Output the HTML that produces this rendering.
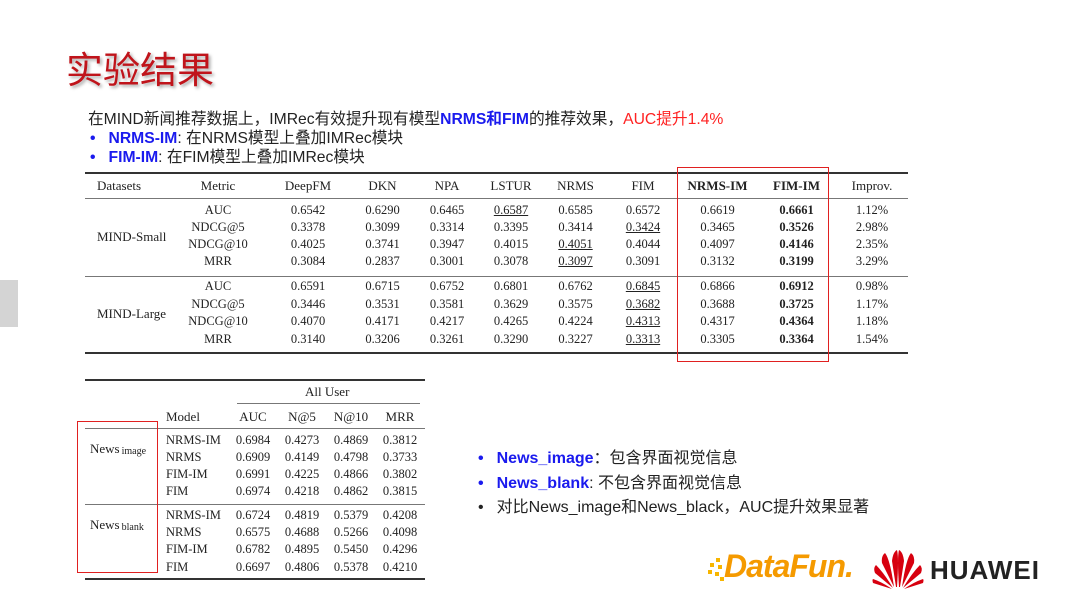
<!DOCTYPE html>
<html><head><meta charset="utf-8"><style>
body{margin:0;width:1080px;height:607px;background:#fff;position:relative;overflow:hidden;font-family:"Liberation Sans","Noto Sans CJK SC",sans-serif}
.a{position:absolute;white-space:nowrap}
.r{position:absolute;display:flex;height:17px;line-height:17px;font-family:"Liberation Serif","Noto Serif CJK SC",serif;font-size:12.5px;color:#222}
.r span{text-align:center;display:block}
.hl{position:absolute;background:#333}
.b{font-weight:bold}
.u{text-decoration:underline}
.blue{color:#1a1aee;font-weight:bold}
.sb{font-size:10px;position:relative;top:3px;margin-left:2px}
</style></head><body>
<div class="a" style="left:0;top:280px;width:18px;height:47px;background:#d4d4d4"></div>
<div class="a" style="left:66px;top:40px;font-size:37px;color:#c0141b;text-shadow:2px 2px 3px rgba(0,0,0,.35);letter-spacing:0px">实验结果</div>
<div class="a" style="left:88px;top:106px;font-size:15.7px;color:#222">在MIND新闻推荐数据上，IMRec有效提升现有模型<span class="blue">NRMS和FIM</span>的推荐效果，<span style="color:#f22">AUC提升1.4%</span></div>
<div class="a" style="left:90px;top:125px;font-size:15.7px;color:#222"><span class="blue" style="margin-right:13px">•</span><span class="blue">NRMS-IM</span>: 在NRMS模型上叠加IMRec模块</div>
<div class="a" style="left:90px;top:144px;font-size:15.7px;color:#222"><span class="blue" style="margin-right:13px">•</span><span class="blue">FIM-IM</span>: 在FIM模型上叠加IMRec模块</div>

<div class="hl" style="left:85px;top:172px;width:823px;height:1.5px"></div>
<div class="hl" style="left:85px;top:198px;width:823px;height:1px;background:#777"></div>
<div class="hl" style="left:85px;top:276px;width:823px;height:1px;background:#777"></div>
<div class="hl" style="left:85px;top:352px;width:823px;height:1.5px"></div>

<div class="r" style="left:85px;top:177px;font-size:13px"><span style="width:85px;text-align:left;padding-left:12px;box-sizing:border-box">Datasets</span><span style="width:96px">Metric</span><span style="width:84px">DeepFM</span><span style="width:65px">DKN</span><span style="width:64px">NPA</span><span style="width:64px">LSTUR</span><span style="width:65px">NRMS</span><span style="width:70px">FIM</span><span style="width:79px" class="b">NRMS-IM</span><span style="width:79px" class="b">FIM-IM</span><span style="width:72px">Improv.</span></div>

<div class="r" style="left:97px;top:228px;font-size:13px">MIND-Small</div>
<div class="r" style="left:97px;top:305px;font-size:13px">MIND-Large</div>

<div class="r" style="left:170px;top:202px"><span style="width:96px">AUC</span><span style="width:84px">0.6542</span><span style="width:65px">0.6290</span><span style="width:64px">0.6465</span><span style="width:64px" class="u">0.6587</span><span style="width:65px">0.6585</span><span style="width:70px">0.6572</span><span style="width:79px">0.6619</span><span style="width:79px" class="b">0.6661</span><span style="width:72px">1.12%</span></div>
<div class="r" style="left:170px;top:219px"><span style="width:96px">NDCG@5</span><span style="width:84px">0.3378</span><span style="width:65px">0.3099</span><span style="width:64px">0.3314</span><span style="width:64px">0.3395</span><span style="width:65px">0.3414</span><span style="width:70px" class="u">0.3424</span><span style="width:79px">0.3465</span><span style="width:79px" class="b">0.3526</span><span style="width:72px">2.98%</span></div>
<div class="r" style="left:170px;top:236px"><span style="width:96px">NDCG@10</span><span style="width:84px">0.4025</span><span style="width:65px">0.3741</span><span style="width:64px">0.3947</span><span style="width:64px">0.4015</span><span style="width:65px" class="u">0.4051</span><span style="width:70px">0.4044</span><span style="width:79px">0.4097</span><span style="width:79px" class="b">0.4146</span><span style="width:72px">2.35%</span></div>
<div class="r" style="left:170px;top:253px"><span style="width:96px">MRR</span><span style="width:84px">0.3084</span><span style="width:65px">0.2837</span><span style="width:64px">0.3001</span><span style="width:64px">0.3078</span><span style="width:65px" class="u">0.3097</span><span style="width:70px">0.3091</span><span style="width:79px">0.3132</span><span style="width:79px" class="b">0.3199</span><span style="width:72px">3.29%</span></div>

<div class="r" style="left:170px;top:278px"><span style="width:96px">AUC</span><span style="width:84px">0.6591</span><span style="width:65px">0.6715</span><span style="width:64px">0.6752</span><span style="width:64px">0.6801</span><span style="width:65px">0.6762</span><span style="width:70px" class="u">0.6845</span><span style="width:79px">0.6866</span><span style="width:79px" class="b">0.6912</span><span style="width:72px">0.98%</span></div>
<div class="r" style="left:170px;top:296px"><span style="width:96px">NDCG@5</span><span style="width:84px">0.3446</span><span style="width:65px">0.3531</span><span style="width:64px">0.3581</span><span style="width:64px">0.3629</span><span style="width:65px">0.3575</span><span style="width:70px" class="u">0.3682</span><span style="width:79px">0.3688</span><span style="width:79px" class="b">0.3725</span><span style="width:72px">1.17%</span></div>
<div class="r" style="left:170px;top:313px"><span style="width:96px">NDCG@10</span><span style="width:84px">0.4070</span><span style="width:65px">0.4171</span><span style="width:64px">0.4217</span><span style="width:64px">0.4265</span><span style="width:65px">0.4224</span><span style="width:70px" class="u">0.4313</span><span style="width:79px">0.4317</span><span style="width:79px" class="b">0.4364</span><span style="width:72px">1.18%</span></div>
<div class="r" style="left:170px;top:331px"><span style="width:96px">MRR</span><span style="width:84px">0.3140</span><span style="width:65px">0.3206</span><span style="width:64px">0.3261</span><span style="width:64px">0.3290</span><span style="width:65px">0.3227</span><span style="width:70px" class="u">0.3313</span><span style="width:79px">0.3305</span><span style="width:79px" class="b">0.3364</span><span style="width:72px">1.54%</span></div>

<div class="a" style="left:677px;top:167px;width:150px;height:193px;border:1.5px solid #e02020"></div>

<!-- small table -->
<div class="hl" style="left:85px;top:379px;width:340px;height:1.5px"></div>
<div class="hl" style="left:237px;top:403px;width:183px;height:1px;background:#777"></div>
<div class="hl" style="left:85px;top:428px;width:340px;height:1px;background:#777"></div>
<div class="hl" style="left:85px;top:504px;width:340px;height:1px;background:#777"></div>
<div class="hl" style="left:85px;top:578px;width:340px;height:1.5px"></div>
<div class="r" style="left:305px;top:383px;font-size:13px">All User</div>
<div class="r" style="left:166px;top:408px;font-size:13px"><span style="width:62px;text-align:left">Model</span><span style="width:50px">AUC</span><span style="width:48px">N@5</span><span style="width:50px">N@10</span><span style="width:48px">MRR</span></div>
<div class="r" style="left:90px;top:440px;font-size:13px">News<span class="sb">image</span></div>
<div class="r" style="left:90px;top:516px;font-size:13px">News<span class="sb">blank</span></div>
<div class="r" style="left:166px;top:432px"><span style="width:62px;text-align:left">NRMS-IM</span><span style="width:50px">0.6984</span><span style="width:48px">0.4273</span><span style="width:50px">0.4869</span><span style="width:48px">0.3812</span></div>
<div class="r" style="left:166px;top:449px"><span style="width:62px;text-align:left">NRMS</span><span style="width:50px">0.6909</span><span style="width:48px">0.4149</span><span style="width:50px">0.4798</span><span style="width:48px">0.3733</span></div>
<div class="r" style="left:166px;top:466px"><span style="width:62px;text-align:left">FIM-IM</span><span style="width:50px">0.6991</span><span style="width:48px">0.4225</span><span style="width:50px">0.4866</span><span style="width:48px">0.3802</span></div>
<div class="r" style="left:166px;top:483px"><span style="width:62px;text-align:left">FIM</span><span style="width:50px">0.6974</span><span style="width:48px">0.4218</span><span style="width:50px">0.4862</span><span style="width:48px">0.3815</span></div>
<div class="r" style="left:166px;top:507px"><span style="width:62px;text-align:left">NRMS-IM</span><span style="width:50px">0.6724</span><span style="width:48px">0.4819</span><span style="width:50px">0.5379</span><span style="width:48px">0.4208</span></div>
<div class="r" style="left:166px;top:524px"><span style="width:62px;text-align:left">NRMS</span><span style="width:50px">0.6575</span><span style="width:48px">0.4688</span><span style="width:50px">0.5266</span><span style="width:48px">0.4098</span></div>
<div class="r" style="left:166px;top:541px"><span style="width:62px;text-align:left">FIM-IM</span><span style="width:50px">0.6782</span><span style="width:48px">0.4895</span><span style="width:50px">0.5450</span><span style="width:48px">0.4296</span></div>
<div class="r" style="left:166px;top:559px"><span style="width:62px;text-align:left">FIM</span><span style="width:50px">0.6697</span><span style="width:48px">0.4806</span><span style="width:50px">0.5378</span><span style="width:48px">0.4210</span></div>
<div class="a" style="left:77px;top:421px;width:79px;height:150px;border:1.5px solid #e02020"></div>

<div class="a" style="left:478px;top:444px;font-size:16px;color:#222"><span class="blue" style="margin-right:13px">•</span><span class="blue">News_image</span>：包含界面视觉信息</div>
<div class="a" style="left:478px;top:469px;font-size:16px;color:#222"><span class="blue" style="margin-right:13px">•</span><span class="blue">News_blank</span>: 不包含界面视觉信息</div>
<div class="a" style="left:478px;top:493px;font-size:16px;color:#222"><span style="margin-right:13px">•</span>对比News_image和News_black，AUC提升效果显著</div>

<svg class="a" style="left:706px;top:555px" width="20" height="28" viewBox="0 0 20 28"><g fill="#f7b500"><rect x="10" y="3" width="4" height="4"/><rect x="4" y="8" width="4" height="4"/><rect x="12" y="10" width="4" height="4"/><rect x="2" y="15" width="4" height="4"/><rect x="9" y="17" width="4" height="4"/><rect x="14" y="22" width="4" height="4"/></g></svg>
<div class="a" style="left:724px;top:548px;font-size:32px;font-weight:bold;font-style:italic;color:#f59a00;letter-spacing:-1px">DataFun.</div>
<svg class="a" style="left:872px;top:549px" width="52" height="40" viewBox="0 0 52 40"><g fill="#d7000f">
<path d="M24 38 L20 12 Q21 3 25 1 Q27 8 25 38Z"/>
<path d="M28 38 L32 12 Q31 3 27 1 Q25 8 27 38Z"/>
<path d="M22 38 L10 14 Q9 7 13 4 Q18 10 22 38Z"/>
<path d="M30 38 L42 14 Q43 7 39 4 Q34 10 30 38Z"/>
<path d="M21 39 L3 24 Q1 19 4 16 Q12 24 21 39Z"/>
<path d="M31 39 L49 24 Q51 19 48 16 Q40 24 31 39Z"/>
<path d="M20 40 L1 34 Q0 31 1 30 Q10 33 20 40Z"/>
<path d="M32 40 L51 34 Q52 31 51 30 Q42 33 32 40Z"/>
</g></svg>
<div class="a" style="left:930px;top:555px;font-size:26px;font-weight:bold;color:#222;letter-spacing:1px">HUAWEI</div>
</body></html>
